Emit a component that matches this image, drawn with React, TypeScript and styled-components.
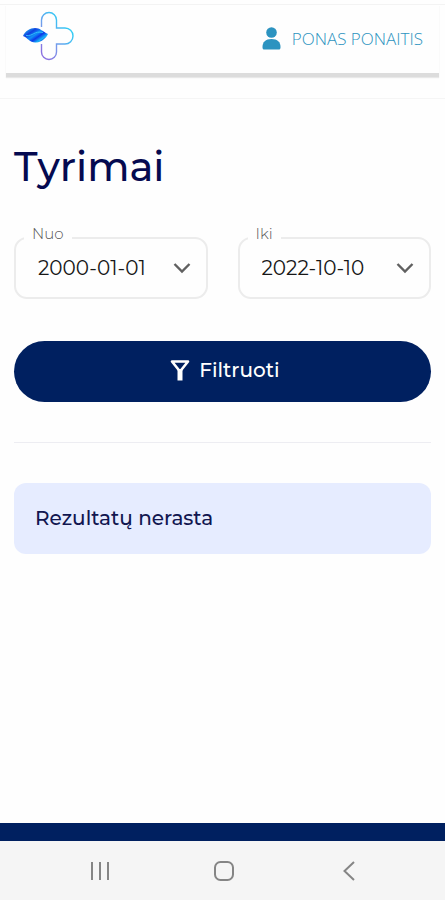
import React from "react";
import styled, { createGlobalStyle } from "styled-components";

const GlobalStyle = createGlobalStyle`
  *, *::before, *::after { box-sizing: border-box; }
  body { margin: 0; background: #fefefe; font-family: Montserrat, Inter, sans-serif; }
`;

const Page = styled.div`
  display: flex;
  flex-direction: column;
  min-height: 100vh;
`;

const Header = styled.header`
  margin-top: 4px;
  padding-bottom: 21px;
  border-top: 1px solid #f3f3f3;
  border-bottom: 1px solid #f5f5f5;
`;

const HeaderBar = styled.div`
  display: flex;
  align-items: center;
  justify-content: space-between;
  height: 72px;
  margin: 0 6px;
  padding: 0 16px 6px;
  border-bottom: 4px solid #dcdcdc;
  box-shadow: 0 1px 1px #e8e8e8;
`;

const HomeLink = styled.a`
  display: flex;
`;

const UserLink = styled.a`
  display: flex;
  align-items: center;
  gap: 11px;
  padding-top: 5px;
  color: #2c93c0;
  font: 300 17px/24px "Open Sans", sans-serif;
  text-decoration: none;
`;

const Main = styled.main`
  flex: 1;
  padding: 40px 14px;
`;

const Title = styled.h1`
  margin: 0 0 42px;
  color: #050a50;
  font-size: 40px;
  font-weight: 500;
  line-height: 56px;
`;

const Filters = styled.form`
  display: grid;
  grid-template-columns: 1fr 1fr;
  gap: 42px 30px;
  padding-bottom: 40px;
  border-bottom: 1px solid #ededf2;
`;

const Field = styled.div`
  position: relative;
  display: flex;
  align-items: center;
  height: 62px;
  border: 2px solid #ececec;
  border-radius: 13px;
`;

const FieldLabel = styled.label`
  position: absolute;
  top: -15px;
  left: 8px;
  padding: 0 8px;
  background: #fefefe;
  color: #555;
  font-size: 15px;
  font-weight: 300;
  line-height: 20px;
`;

const DateSelect = styled.select`
  appearance: none;
  width: 100%;
  height: 100%;
  padding: 0 40px 0 22px;
  border: 0;
  border-radius: 12px;
  background: transparent;
  color: #171717;
  font: inherit;
  font-size: 20px;
`;

const Chevron = styled.svg`
  position: absolute;
  right: 15px;
  pointer-events: none;
`;

const FilterButton = styled.button`
  grid-column: 1 / -1;
  display: flex;
  align-items: center;
  justify-content: center;
  gap: 9px;
  height: 61px;
  padding: 0 0 3px 5px;
  border: 0;
  border-radius: 31px;
  background: #002060;
  color: #fff;
  font: inherit;
  font-size: 20px;
  font-weight: 500;
`;

const Notice = styled.p`
  margin: 40px 0 0;
  padding: 23px 21px 24px;
  border-radius: 12px;
  background: #e6ecff;
  color: #111650;
  font-size: 20px;
  font-weight: 500;
  line-height: 24px;
`;

const Footer = styled.footer`
  height: 18px;
  background: #002060;
`;

const SystemNav = styled.nav`
  display: grid;
  grid-template-columns: repeat(3, 1fr);
  place-items: center;
  height: 59px;
  padding: 0 34px 0 38px;
  background: #f5f5f5;
`;

const NavButton = styled.button`
  display: flex;
  padding: 0;
  border: 0;
  background: transparent;
  color: #858585;
`;

const Logo = () => (
  <svg width="53" height="52" viewBox="0 0 53 52" fill="none" aria-hidden="true">
    <defs>
      <linearGradient id="crossStroke" x1="18" y1="40" x2="52" y2="14" gradientUnits="userSpaceOnUse">
        <stop stopColor="#8a70e0" />
        <stop offset=".35" stopColor="#7898ea" />
        <stop offset=".65" stopColor="#4ab8f2" />
        <stop offset="1" stopColor="#20dcf6" />
      </linearGradient>
      <linearGradient id="leafFill" x1="8" y1="17" x2="19" y2="33" gradientUnits="userSpaceOnUse">
        <stop stopColor="#20a8f0" />
        <stop offset=".25" stopColor="#1040e0" />
        <stop offset=".48" stopColor="#1090f8" />
        <stop offset=".65" stopColor="#0c38e8" />
        <stop offset=".85" stopColor="#18b8f8" />
        <stop offset="1" stopColor="#1020d0" />
      </linearGradient>
    </defs>
    <path
      d="M19.500 17V10a7.500 7.500 0 0 1 15 0v8h8.500a8 8 0 0 1 0 16h-8.500v8a7.500 7.500 0 0 1-15 0v-8"
      stroke="url(#crossStroke)"
      strokeWidth="1.400"
    />
    <path d="M1 26C3 21 8 18 13 18c5 0 7 3 13 6-2 4-6 8-12 8.500C8 33 6 28 1 26Z" fill="url(#leafFill)" />
    <path d="M4 25.500c7 1 8-5 17-3" stroke="#35c4fa" strokeWidth=".9" />
  </svg>
);

type DateFieldProps = { id: string; label: string; value: string };

const DateField = ({ id, label, value }: DateFieldProps) => (
  <Field>
    <FieldLabel htmlFor={id}>{label}</FieldLabel>
    <DateSelect id={id} name={id} defaultValue={value}>
      <option>{value}</option>
    </DateSelect>
    <Chevron width="18" height="12" viewBox="0 0 18 12" fill="none" stroke="#606060" strokeWidth="2.400" aria-hidden="true">
      <path d="m1.500 2 7.500 7.500L16.500 2" />
    </Chevron>
  </Field>
);

export default function App() {
  return (
    <>
      <GlobalStyle />
      <Page>
        <Header>
          <HeaderBar>
            <HomeLink href="#" aria-label="Pradžia">
              <Logo />
            </HomeLink>
            <UserLink href="#">
              <svg width="19" height="23" viewBox="0 0 19 23" fill="currentColor" aria-hidden="true">
                <circle cx="9.500" cy="5.500" r="5.300" />
                <path d="M.5 20c0-5 3-8 9-8s9 3 9 8c0 2-.5 2.500-2 2.500h-14c-1.500 0-2-.5-2-2.500Z" />
              </svg>
              PONAS PONAITIS
            </UserLink>
          </HeaderBar>
        </Header>
        <Main>
          <Title>Tyrimai</Title>
          <Filters onSubmit={(event: React.FormEvent) => event.preventDefault()}>
            <DateField id="nuo" label="Nuo" value="2000-01-01" />
            <DateField id="iki" label="Iki" value="2022-10-10" />
            <FilterButton type="submit">
              <svg width="20" height="22" viewBox="0 0 20 22" fill="none" stroke="currentColor" aria-hidden="true">
                <path d="M2 2.500h16L10 12.500Z" strokeWidth="2.600" strokeLinejoin="round" />
                <path d="M7.500 10h5v11.500h-5Z" fill="currentColor" stroke="none" />
              </svg>
              Filtruoti
            </FilterButton>
          </Filters>
          <Notice role="status">Rezultatų nerasta</Notice>
        </Main>
        <Footer />
        <SystemNav aria-label="Sistemos naršymas">
          <NavButton type="button" aria-label="Naujausios programos">
            <svg width="20" height="20" viewBox="0 0 20 20" stroke="currentColor" strokeWidth="2" aria-hidden="true">
              <path d="M2 1v18M10 1v18M18 1v18" />
            </svg>
          </NavButton>
          <NavButton type="button" aria-label="Pagrindinis ekranas">
            <svg width="20" height="20" viewBox="0 0 20 20" fill="none" stroke="currentColor" strokeWidth="2" aria-hidden="true">
              <rect x="1" y="1" width="18" height="18" rx="5.500" />
            </svg>
          </NavButton>
          <NavButton type="button" aria-label="Atgal">
            <svg width="12" height="20" viewBox="0 0 12 20" fill="none" stroke="currentColor" strokeWidth="2" aria-hidden="true">
              <path d="m11 1-9.500 9L11 19" />
            </svg>
          </NavButton>
        </SystemNav>
      </Page>
    </>
  );
}
